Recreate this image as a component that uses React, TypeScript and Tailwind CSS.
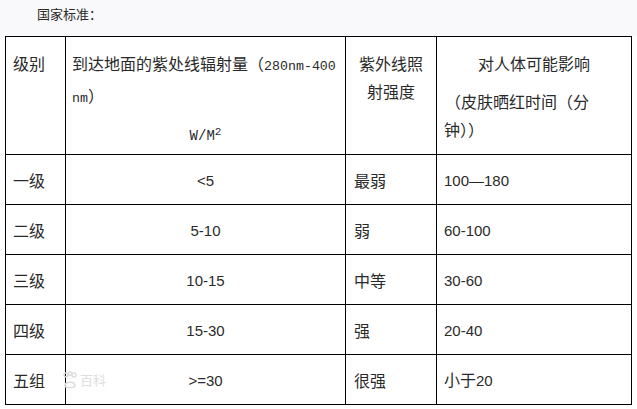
import React from "react";

const cjk = { fontFamily: '"Noto Sans CJK SC", "Liberation Sans", sans-serif' };
const mono = { fontFamily: '"Liberation Mono", "Noto Sans CJK SC", monospace' };
const sans = { fontFamily: '"Liberation Sans", "Noto Sans CJK SC", sans-serif' };

const rows: [string, string, string, string][] = [
  ["一级", "<5", "最弱", "100—180"],
  ["二级", "5-10", "弱", "60-100"],
  ["三级", "10-15", "中等", "30-60"],
  ["四级", "15-30", "强", "20-40"],
  ["五组", ">=30", "很强", "小于20"],
];

function Num({ s }: { s: string }) {
  const parts = s.split(/([\u4e00-\u9fff]+)/).filter(Boolean);
  return (
    <span className="leading-[24px]">
      {parts.map((p, i) =>
        /[\u4e00-\u9fff]/.test(p) ? (
          <span key={i} style={cjk}>{p}</span>
        ) : (
          <span key={i} style={sans} className="text-[15px]">{p}</span>
        )
      )}
    </span>
  );
}

export default function App() {
  return (
    <div className="w-[637px] h-[409px] bg-white text-[#2a2a2a] overflow-hidden relative" style={cjk}>
      <div className="h-[36px] bg-[#f9f9fb] pl-[37px] pt-[4px] text-[13px] leading-[20px]">国家标准：</div>
      <div className="ml-[5px] w-[627px] grid grid-cols-[60px_280px_91px_195px] border-l border-t border-black text-[16px]">
        <div className="h-[118px] border-r border-b border-black pl-[7px] pt-[12px] leading-[28px]">级别</div>
        <div className="h-[118px] border-r border-b border-black pl-[6px] pt-[12px] leading-[28px]">
          <div>
            到达地面的紫处线辐射量（<span style={mono} className="text-[13.3px]">280nm-400</span>
          </div>
          <div>
            <span style={mono} className="text-[13.3px]">nm</span>）
          </div>
          <div className="text-center mt-[10px] pr-[6px] leading-[20px]">
            <span style={mono} className="text-[14px]">W/M<sup className="text-[11px]">2</sup></span>
          </div>
        </div>
        <div className="h-[118px] border-r border-b border-black pt-[12px] leading-[28px] text-center">
          <div>紫外线照</div>
          <div>射强度</div>
        </div>
        <div className="h-[118px] border-r border-b border-black pt-[12px] leading-[28px] pl-[7px]">
          <div className="text-center pr-[7px]">对人体可能影响</div>
          <div className="mt-[10px] pl-[1px]">（皮肤晒红时间（分</div>
          <div>钟））</div>
        </div>
        {rows.map((r, i) => (
          <React.Fragment key={i}>
            <div className="h-[50px] border-r border-b border-black pl-[7px] flex items-center">{r[0]}</div>
            <div className="h-[50px] border-r border-b border-black flex items-center justify-center">
              <Num s={r[1]} />
            </div>
            <div className="h-[50px] border-r border-b border-black pl-[8px] flex items-center">{r[2]}</div>
            <div className="h-[50px] border-r border-b border-black pl-[7px] flex items-center">
              <Num s={r[3]} />
            </div>
          </React.Fragment>
        ))}
      </div>
      <div className="absolute left-[62px] top-[370px] flex items-center gap-[2px] text-[#dedede] text-[13px] pointer-events-none">
        <svg width="16" height="18" viewBox="0 0 16 18" fill="none" stroke="#dcdcdc" strokeWidth="1.4">
          <circle cx="4" cy="4" r="2" />
          <circle cx="8" cy="2.5" r="1.8" />
          <circle cx="12" cy="4" r="2" />
          <path d="M3 15 C3 10, 13 10, 13 15 C13 17, 3 17, 3 15 Z" />
        </svg>
        <span>百科</span>
      </div>
    </div>
  );
}
